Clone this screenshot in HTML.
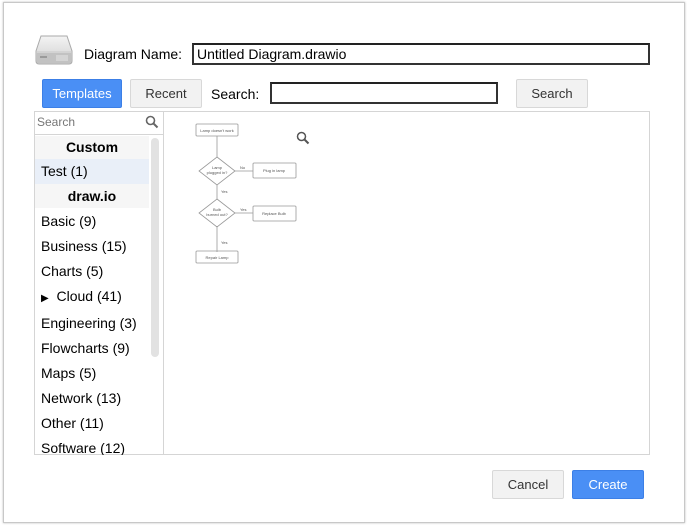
<!DOCTYPE html>
<html><head><style>
*{box-sizing:border-box;margin:0;padding:0}
body{width:687px;height:525px;background:#fff;font-family:"Liberation Sans",Arial,sans-serif;font-size:14px;color:#000;position:relative;overflow:hidden}
.dlg{position:absolute;left:3px;top:2px;width:682px;height:521px;border:1px solid #c8c8c8;box-shadow:0 0 2px #bbb}
.a{position:absolute}
.btn{position:absolute;border:1px solid #d8d8d8;background:#f2f2f2;border-radius:2px;font-size:13px;color:#333;text-align:center}
.blue{background:#4a8ff5;border-color:#3c7fe6;color:#fff}
.inp{position:absolute;border:2px solid #333;border-top-color:#222;background:#fff}
.item{position:absolute;left:7px;font-size:14px}
</style></head><body>
<div class="dlg"></div>
<svg class="a" style="left:35px;top:35px" width="38" height="30" viewBox="0 0 38 30">
<defs><linearGradient id="g" x1="0" y1="0" x2="0" y2="1"><stop offset="0" stop-color="#f4f4f4"/><stop offset="1" stop-color="#cfcfcf"/></linearGradient></defs>
<path d="M6 1 H32 L37 16 V26 Q37 29 34 29 H4 Q1 29 1 26 V16 Z" fill="url(#g)" stroke="#aaa"/>
<path d="M1 17 H37" stroke="#c8c8c8"/>
<rect x="2" y="18" width="34" height="10" fill="#c2c2c2"/>
<path d="M22 20v6M24 20v6M26 20v6M28 20v6M30 20v6M32 20v6" stroke="#e6e6e6"/>
<rect x="5" y="21" width="7" height="2" fill="#9a9a9a"/>
</svg>
<div class="a" style="left:84px;top:46px">Diagram Name:</div>
<div class="inp" style="left:192px;top:43px;width:458px;height:22px;padding:1px 3px;font-size:14px">Untitled Diagram.drawio</div>
<div class="btn blue" style="left:42px;top:79px;width:80px;height:29px;line-height:27px">Templates</div>
<div class="btn" style="left:130px;top:79px;width:72px;height:29px;line-height:27px">Recent</div>
<div class="a" style="left:211px;top:86px">Search:</div>
<div class="inp" style="left:270px;top:82px;width:228px;height:22px"></div>
<div class="btn" style="left:516px;top:79px;width:72px;height:29px;line-height:27px">Search</div>
<div class="a" style="left:34px;top:111px;width:616px;height:344px;border:1px solid #d5d5d5"></div>
<div class="a" style="left:34px;top:111px;width:130px;height:344px;border-right:1px solid #d5d5d5;overflow:hidden">
<div class="a" style="left:0;top:0;width:129px;height:24px;border-bottom:1px solid #d5d5d5;font-size:12px;color:#777;padding:4px 3px">Search</div>
<svg class="a" style="left:111px;top:4px" width="14" height="14"><circle cx="5.5" cy="5.5" r="4" fill="none" stroke="#666" stroke-width="1.6"/><path d="M8.5 8.5l4 4" stroke="#666" stroke-width="2"/></svg>
<div class="a" style="left:1px;top:25px;width:114px;height:23px;background:#f6f6f6;font-weight:bold;text-align:center;line-height:23px">Custom</div>
<div class="a" style="left:1px;top:48px;width:114px;height:25px;background:#e9eff8;padding-left:6px;line-height:25px">Test (1)</div>
<div class="a" style="left:1px;top:73px;width:114px;height:24px;background:#f6f6f6;font-weight:bold;text-align:center;line-height:24px">draw.io</div>
<div class="item" style="top:102px">Basic (9)</div>
<div class="item" style="top:127px">Business (15)</div>
<div class="item" style="top:152px">Charts (5)</div>
<div class="item" style="top:177px"><span style="font-size:10px">&#9654;</span>&nbsp; Cloud (41)</div>
<div class="item" style="top:204px">Engineering (3)</div>
<div class="item" style="top:229px">Flowcharts (9)</div>
<div class="item" style="top:254px">Maps (5)</div>
<div class="item" style="top:279px">Network (13)</div>
<div class="item" style="top:304px">Other (11)</div>
<div class="item" style="top:329px">Software (12)</div>
<div class="a" style="left:117px;top:27px;width:8px;height:219px;background:#e2e2e2;border-radius:4px"></div>
</div>
<svg class="a" style="left:190px;top:120px" width="125" height="150" viewBox="0 0 125 150" font-family="Liberation Sans" font-size="4" fill="#555">
<g stroke="#999" fill="none" stroke-width="0.8">
<rect x="6" y="4" width="42" height="12" rx="1"/>
<path d="M27 16V37M27 106V132"/>
<path d="M27 37L45 51 27 65 9 51Z"/>
<path d="M27 79L45 93 27 107 9 93Z"/>
<path d="M45 51H63M45 93H63"/>
<rect x="63" y="43" width="43" height="15" rx="1"/>
<rect x="63" y="86" width="43" height="15" rx="1"/>
<rect x="6" y="131" width="42" height="12" rx="1"/>
<path d="M27 65V79"/>
</g>
<text x="27" y="12" text-anchor="middle">Lamp doesn't work</text>
<text x="27" y="49" text-anchor="middle">Lamp</text><text x="27" y="54" text-anchor="middle">plugged in?</text>
<text x="84" y="52" text-anchor="middle">Plug in lamp</text>
<text x="27" y="91" text-anchor="middle">Bulb</text><text x="27" y="96" text-anchor="middle">burned out?</text>
<text x="84" y="95" text-anchor="middle">Replace Bulb</text>
<text x="27" y="139" text-anchor="middle">Repair Lamp</text>
<text x="50" y="49">No</text><text x="50" y="91">Yes</text><text x="31" y="73">Yes</text><text x="31" y="124">Yes</text>
</svg>
<svg class="a" style="left:296px;top:131px" width="14" height="14"><circle cx="5.5" cy="5.5" r="4" fill="none" stroke="#555" stroke-width="1.5"/><path d="M8.5 8.5l4 4" stroke="#555" stroke-width="2"/></svg>
<div class="btn" style="left:492px;top:470px;width:72px;height:29px;line-height:27px">Cancel</div>
<div class="btn blue" style="left:572px;top:470px;width:72px;height:29px;line-height:27px">Create</div>
</body></html>
